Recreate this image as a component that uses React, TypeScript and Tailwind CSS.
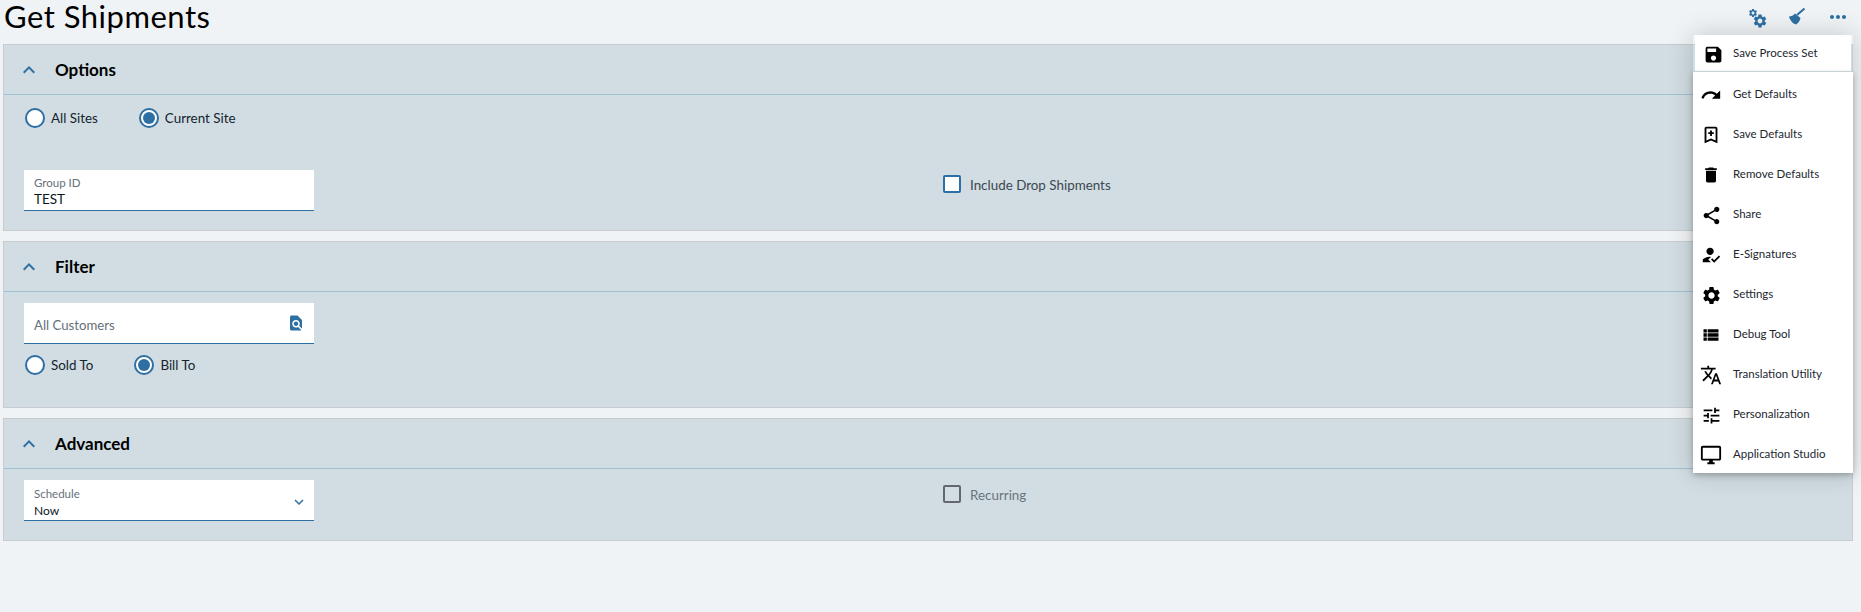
import {
  MdSave,
  MdRedo,
  MdDelete,
  MdShare,
  MdSettings,
  MdViewList,
  MdTranslate,
  MdTune,
  MdOutlineDesktopWindows,
  MdMoreHoriz,
  MdKeyboardArrowUp,
  MdKeyboardArrowDown,
  MdFindInPage,
  MdHowToReg,
} from "react-icons/md";

function BookmarkPlus() {
  return (
    <svg width="22" height="22" viewBox="0 0 24 24" fill="currentColor">
      <path d="M17 3H7c-1.1 0-2 .9-2 2v16l7-3 7 3V5c0-1.1-.9-2-2-2zm0 15-5-2.18L7 18V5h10v13z" />
      <path d="M11 7h2v2h2v2h-2v2h-2v-2H9V9h2z" />
    </svg>
  );
}

function Broom() {
  return (
    <svg width="18" height="18" viewBox="0 0 18 18" fill="currentColor">
      <path d="M15.5 .5 8 7" fill="none" stroke="currentColor" strokeWidth="2" />
      <path d="M6 5.5 11.5 10c-.6 2.8-2 5-4.6 6.5C4 15.8 1 12.5 0 8.5c2.4 0 4.5-1 6-3z" />
    </svg>
  );
}

const menuItems = [
  { label: "Get Defaults", icon: <MdRedo size={22} /> },
  { label: "Save Defaults", icon: <BookmarkPlus /> },
  { label: "Remove Defaults", icon: <MdDelete size={20} /> },
  { label: "Share", icon: <MdShare size={21} /> },
  { label: "E-Signatures", icon: <MdHowToReg size={22} /> },
  { label: "Settings", icon: <MdSettings size={21} /> },
  { label: "Debug Tool", icon: <MdViewList size={20} /> },
  { label: "Translation Utility", icon: <MdTranslate size={22} /> },
  { label: "Personalization", icon: <MdTune size={21} /> },
  { label: "Application Studio", icon: <MdOutlineDesktopWindows size={22} /> },
];

function Radio({ label, checked }: { label: string; checked?: boolean }) {
  return (
    <label className="flex items-center gap-[6px] text-[13.4px] text-[#14232e]">
      <span className="flex h-[20px] w-[20px] items-center justify-center rounded-full border-2 border-[#2d6fa3] bg-white">
        {checked && <span className="h-[12px] w-[12px] rounded-full bg-[#2d6fa3]" />}
      </span>
      {label}
    </label>
  );
}

function Section({ title, height, children }: { title: string; height: string; children: React.ReactNode }) {
  return (
    <section className={`${height} border border-[#c8cccf] bg-[#d1dde2]`}>
      <div className="flex h-[50px] items-center border-b border-[#9fc3d3] pl-[13px]">
        <MdKeyboardArrowUp size={24} className="text-[#2d6fa3]" />
        <h2 className="ml-[14px] pt-[1px] text-[17px] font-bold text-black">{title}</h2>
      </div>
      {children}
    </section>
  );
}

export default function App() {
  return (
    <div className="relative h-[612px] w-[1861px] overflow-hidden bg-[#eff3f6] font-['Lato',sans-serif]">
      <header className="flex h-[44px] items-start justify-between pl-[4px] pr-[11px]">
        <h1 className="text-[31px] leading-[33px] tracking-[0.5px] text-black">Get Shipments</h1>
        <div className="mt-[5px] flex items-center text-[#2d6fa3]">
          <span className="relative block h-[24px] w-[20px]">
            <MdSettings size={10} className="absolute left-0 top-[3px]" />
            <MdSettings size={16} className="absolute right-0 top-[8px]" />
          </span>
          <span className="ml-[21px]">
            <Broom />
          </span>
          <span className="ml-[19px]">
            <MdMoreHoriz size={24} />
          </span>
        </div>
      </header>

      <main className="ml-[3px] mr-[8px] flex flex-col gap-[10px]">
        <Section title="Options" height="h-[187px]">
          <div className="flex gap-[41px] pl-[21px] pt-[13px]">
            <Radio label="All Sites" />
            <Radio label="Current Site" checked />
          </div>
          <div className="mt-[42px] flex pl-[20px]">
            <div className="h-[41px] w-[290px] border-b border-[#2d6fa3] bg-white pl-[10px] pt-[5px]">
              <div className="text-[11.5px] leading-[15px] text-[#667079]">Group ID</div>
              <div className="pt-[1px] text-[13.5px] leading-[17px] text-[#0b1720]">TEST</div>
            </div>
            <label className="ml-[629px] mt-[5px] flex items-start gap-[9px] text-[13.4px] leading-[20px] text-[#3c4650]">
              <span className="h-[18px] w-[18px] rounded-[2px] border-2 border-[#2d6fa3] bg-white" />
              Include Drop Shipments
            </label>
          </div>
        </Section>

        <Section title="Filter" height="h-[167px]">
          <div className="pl-[20px] pt-[11px]">
            <div className="flex h-[41px] w-[290px] items-center justify-between border-b border-[#2d6fa3] bg-white pl-[10px] pr-[9px]">
              <span className="mt-[5px] text-[13.2px] text-[#667079]">All Customers</span>
              <MdFindInPage size={18} className="text-[#2d6fa3]" />
            </div>
          </div>
          <div className="flex gap-[41px] pl-[21px] pt-[11px]">
            <Radio label="Sold To" />
            <Radio label="Bill To" checked />
          </div>
        </Section>

        <Section title="Advanced" height="h-[123px]">
          <div className="flex pl-[20px] pt-[11px]">
            <div className="relative h-[41px] w-[290px] border-b border-[#2d6fa3] bg-white pl-[10px] pt-[6px]">
              <div className="text-[11.5px] leading-[15px] text-[#667079]">Schedule</div>
              <div className="pt-[1px] text-[12px] leading-[17px] text-[#0b1720]">Now</div>
              <MdKeyboardArrowDown size={18} className="absolute right-[6px] top-[13px] text-[#2d6fa3]" />
            </div>
            <label className="ml-[629px] mt-[5px] flex items-start gap-[9px] text-[13.4px] leading-[20px] text-[#6a747c]">
              <span className="h-[18px] w-[18px] rounded-[2px] border-2 border-[#63686c]" />
              Recurring
            </label>
          </div>
        </Section>
      </main>

      <div className="absolute left-[1693px] top-[35px] w-[160px] text-[11.5px] text-[#1c2730] shadow-[0_0_24px_rgba(0,0,0,0.18)]">
        <div className="mx-[2px] flex h-[36px] items-center bg-white pl-[6px]">
          <span className="flex w-[24px] translate-y-[1px] justify-center text-black">
            <MdSave size={21} />
          </span>
          <span className="ml-[8px]">Save Process Set</span>
        </div>
        <div className="mt-[1px] flex h-[401px] flex-col bg-white pt-[3px] shadow-[0_2px_6px_rgba(0,0,0,0.25)]">
          {menuItems.map((item) => (
            <div key={item.label} className="flex h-[40px] shrink-0 items-center pl-[6px]">
              <span className="flex w-[24px] justify-center text-black">{item.icon}</span>
              <span className="ml-[10px] -translate-y-[1.5px]">{item.label}</span>
            </div>
          ))}
        </div>
      </div>
    </div>
  );
}
